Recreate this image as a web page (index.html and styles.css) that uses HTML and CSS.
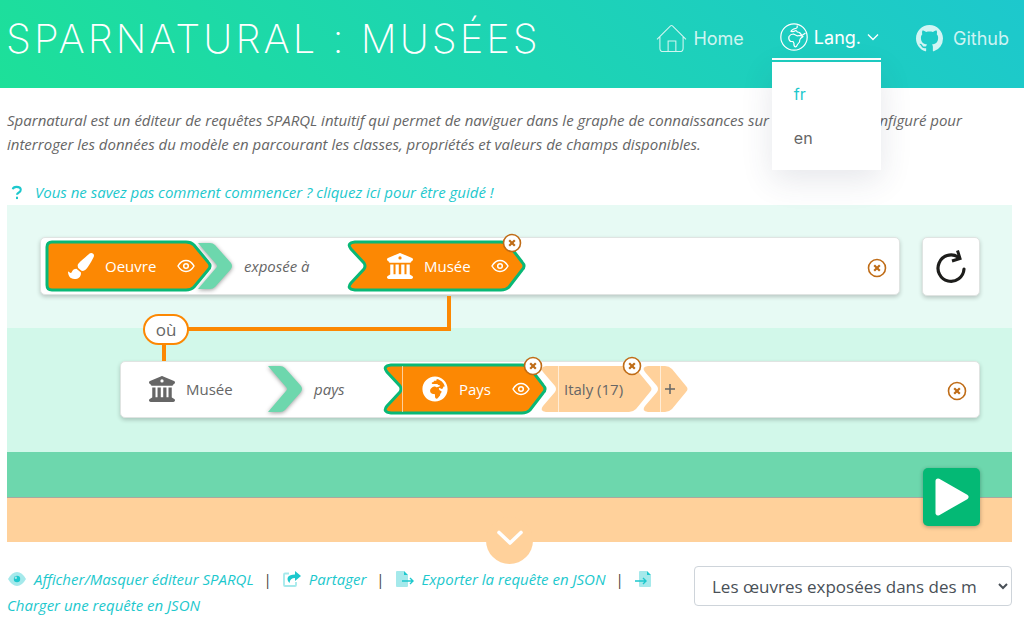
FILE: index.html
```html
<!DOCTYPE html>
<html lang="fr">
<head>
<meta charset="utf-8">
<meta name="viewport" content="width=device-width, initial-scale=1">
<title>Sparnatural : Musées</title>
<link rel="stylesheet" href="styles.css">
</head>
<body>
<svg class="sprite" aria-hidden="true">
  <symbol id="i-museum" viewBox="0 0 512 512"><path d="M243.400 2.600l-224 96c-14 6-21.800 21-18.700 35.800S16.800 160 32 160v8c0 13.300 10.700 24 24 24H456c13.300 0 24-10.700 24-24v-8c15.200 0 28.300-10.700 31.300-25.600s-4.800-29.900-18.700-35.800l-224-96c-8-3.400-17.200-3.400-25.200 0zM128 224H64V420.300c-.6 .3-1.200 .7-1.800 1.100l-48 32c-11.700 7.800-17 22.400-12.900 35.900S17.900 512 32 512H480c14.100 0 26.500-9.200 30.600-22.700s-1.100-28.100-12.900-35.900l-48-32c-.6-.4-1.200-.7-1.800-1.100V224H384V416H344V224H280V416H232V224H168V416H128V224zM256 64a32 32 0 1 1 0 64 32 32 0 1 1 0-64z"/></symbol>
  <symbol id="i-brush" viewBox="0 0 512 512"><path d="M167.020 309.340c-40.120 2.580-76.530 17.860-97.190 72.300-2.350 6.210-8 9.980-14.590 9.980-11.110 0-45.460-27.670-55.250-34.350C0 439.620 37.930 512 128 512c75.860 0 128-43.770 128-120.190 0-3.110-.65-6.080-.97-9.130l-88.010-73.340zM457.890 0c-15.160 0-29.370 6.710-40.210 16.450C213.270 199.050 192 203.340 192 257.090c0 13.700 3.250 26.760 8.730 38.700l63.820 53.180c7.210 1.800 14.640 3.030 22.390 3.030 62.110 0 98.110-45.470 211.160-256.460 7.380-14.350 13.900-29.850 13.900-45.990C512 20.640 486 0 457.890 0z"/></symbol>
  <symbol id="i-globe" viewBox="0 0 496 512"><path d="M248 8C111.030 8 0 119.030 0 256s111.030 248 248 248 248-111.030 248-248S384.970 8 248 8zm160 215.500v6.930c0 5.870-3.320 11.240-8.570 13.860l-15.390 7.700a15.485 15.485 0 0 1-15.530-.97l-18.210-12.140a15.520 15.520 0 0 0-13.500-1.810l-2.650.88c-9.700 3.230-13.660 14.790-7.990 23.300l13.240 19.860c2.870 4.310 7.710 6.900 12.890 6.900h8.210c8.560 0 15.500 6.940 15.500 15.500v11.340c0 3.350-1.090 6.620-3.100 9.300l-18.740 24.980c-1.420 1.900-2.390 4.100-2.830 6.430l-4.300 22.830c-.62 3.290-2.290 6.290-4.760 8.560a159.608 159.608 0 0 0-25 29.160l-13.030 19.550a27.756 27.756 0 0 1-23.090 12.360c-10.510 0-20.120-5.940-24.820-15.340a78.902 78.902 0 0 1-8.330-35.290V367.500c0-8.560-6.940-15.500-15.500-15.500h-25.880c-14.490 0-28.380-5.760-38.630-16a54.659 54.659 0 0 1-16-38.630v-14.060c0-17.190 8.100-33.380 21.850-43.700l27.580-20.690a54.663 54.663 0 0 1 32.780-10.930h.89c8.480 0 16.850 1.970 24.430 5.770l14.720 7.360c3.680 1.840 7.930 2.140 11.830.84l47.310-15.770c6.330-2.110 10.600-8.030 10.600-14.700 0-8.560-6.940-15.500-15.500-15.500h-10.090c-4.110 0-8.050-1.630-10.960-4.540l-6.920-6.920a15.493 15.493 0 0 0-10.960-4.540H199.500c-8.560 0-15.500-6.940-15.500-15.500v-4.400c0-7.110 4.840-13.310 11.740-15.040l14.450-3.610c3.740-.94 7-3.230 9.140-6.440l8.080-12.110c2.870-4.310 7.710-6.900 12.890-6.900h24.210c8.560 0 15.500-6.940 15.500-15.500v-21.700C359.230 71.630 422.860 131.020 441.930 208H423.500c-8.560 0-15.500 6.940-15.500 15.500z"/></symbol>
  <symbol id="i-eye" viewBox="0 0 18 14"><path d="M1 7C3 3.500 5.800 1.500 9 1.500S15 3.500 17 7c-2 3.500-4.800 5.500-8 5.500S3 10.500 1 7z" fill="none" stroke="currentColor" stroke-width="1.500"/><circle cx="9" cy="7" r="2.300" fill="none" stroke="currentColor" stroke-width="1.500"/></symbol>
  <symbol id="i-close" viewBox="0 0 20 20"><circle cx="10" cy="10" r="8.500" fill="#fff" stroke="#bf6c17" stroke-width="1.600"/><path d="M7.200 7.200l5.600 5.600M12.800 7.200l-5.600 5.600" stroke="#bf6c17" stroke-width="2.200" /></symbol>
  <symbol id="i-arrow" viewBox="0 0 34 46"><path d="M0 0H12Q15 0 17 2L33 20Q35 23 33 26L17 44Q15 46 12 46H0L18 25Q20 23 18 21z"/></symbol>
</svg>

<header class="header">
  <h1 class="title">SPARNATURAL : MUSÉES</h1>
  <nav class="nav">
    <a class="nav-link" href="#home">
      <svg class="icon-home" viewBox="0 0 32 30" fill="none" stroke="currentColor"><path d="M1 16L15 2Q16 1.200 17 2L31 16M4 13V25Q4 28.500 7.500 28.500H24.500Q28 28.500 28 25V13M12.500 28V17.500H20.500V28" stroke-width="1.100"/></svg>
      Home
    </a>
    <div class="lang">
      <a class="nav-link nav-active" href="#lang">
        <svg class="icon-lang" viewBox="0 0 28 28" fill="none" stroke="currentColor" stroke-width="1.200" stroke-linejoin="round"><circle cx="14" cy="14" r="13.200"/><path d="M17 2.500Q18 5 15.500 5.500Q11.500 6.500 11 8.500Q13 9 16 7.500Q17 9.500 19.500 9.500L22 12.500L25.500 10M9 13.500Q10.500 11 13.500 11L17 12.800L20 12.500L23 13.500L20.500 15.500Q19.500 17 19.500 19L17.500 21.500Q16.500 24 15.500 24Q13.500 23 14 20.500L13 18.500H10.500Q8 16.500 9 13.500z"/></svg>
        Lang.
        <svg class="icon-caret" viewBox="0 0 12 8" fill="none" stroke="currentColor" stroke-width="1.400"><path d="M1 1.500L6 6.500L11 1.500"/></svg>
      </a>
      <div class="menu">
        <a class="menu-item menu-current" href="#fr">fr</a>
        <a class="menu-item" href="#en">en</a>
      </div>
    </div>
    <a class="nav-link nav-github" href="#github">
      <svg class="icon-github" viewBox="0 0 16 16" fill="currentColor"><path d="M8 0C3.580 0 0 3.580 0 8c0 3.540 2.290 6.530 5.470 7.590.4.070.55-.17.55-.38 0-.19-.01-.82-.01-1.490-2.010.37-2.530-.49-2.690-.94-.09-.23-.48-.94-.82-1.130-.28-.15-.68-.52-.01-.53.63-.01 1.080.58 1.230.82.72 1.210 1.870.87 2.330.66.07-.52.28-.87.51-1.070-1.780-.2-3.640-.89-3.640-3.950 0-.87.31-1.590.82-2.150-.08-.2-.36-1.020.08-2.120 0 0 .67-.21 2.200.82.64-.18 1.320-.27 2-.27s1.360.09 2 .27c1.530-1.040 2.200-.82 2.200-.82.44 1.100.16 1.920.08 2.120.51.56.82 1.270.82 2.150 0 3.070-1.870 3.750-3.650 3.950.29.25.54.73.54 1.480 0 1.070-.01 1.930-.01 2.200 0 .21.15.46.55.38A8.013 8.013 0 0 0 16 8c0-4.420-3.580-8-8-8z"/></svg>
      Github
    </a>
  </nav>
</header>

<main class="main">
  <p class="intro">Sparnatural est un éditeur de requêtes SPARQL intuitif qui permet de naviguer dans le graphe de connaissances sur lequel il a été configuré pour interroger les données du modèle en parcourant les classes, propriétés et valeurs de champs disponibles.</p>
  <a class="guide" href="#guide">
    <svg class="icon-help" viewBox="0 0 12 16" fill="none" stroke="currentColor" stroke-width="2.200"><path d="M1.500 4.500Q2 2 5.500 2Q10 2 10 5Q10 7 8 8Q6 9 6 10.500"/><path d="M6 12.500V15"/></svg>
    <span>Vous ne savez pas comment commencer ? cliquez ici pour être guidé !</span>
  </a>

  <section class="builder">
    <div class="band band-first">
      <div class="card">
        <div class="chip chip-start">
          <svg class="shape" viewBox="0 0 167 52"><path class="selected" d="M7 2H141Q146 2 149 5L163 22Q167 26 163 30L149 47Q146 50 141 50H7Q2 50 2 45V7Q2 2 7 2z"/></svg>
          <svg class="icon-class"><use href="#i-brush"/></svg>
          <span class="chip-label">Oeuvre</span>
          <button class="eye" aria-label="Afficher Oeuvre"><svg><use href="#i-eye"/></svg></button>
        </div>
        <svg class="arrow arrow-tucked"><use href="#i-arrow"/></svg>
        <span class="property property-long">exposée à</span>
        <div class="chip chip-museum">
          <svg class="shape" viewBox="0 0 179 52"><path class="selected" d="M8 2H154Q159 2 162 5L175 22Q179 26 175 30L162 47Q159 50 154 50H8Q-1 49 4 43L17 29Q19 26 17 23L4 9Q-1 3 8 2z"/></svg>
          <svg class="icon-class"><use href="#i-museum"/></svg>
          <span class="chip-label">Musée</span>
          <button class="eye" aria-label="Afficher Musée"><svg><use href="#i-eye"/></svg></button>
          <button class="close badge" aria-label="Retirer Musée"><svg><use href="#i-close"/></svg></button>
        </div>
        <button class="close close-row" aria-label="Supprimer la ligne"><svg><use href="#i-close"/></svg></button>
      </div>
      <button class="reset" aria-label="Réinitialiser">
        <svg viewBox="0 0 32 34" fill="none" stroke="#1d1d1b" stroke-width="3.200"><path d="M29 19A13 13.200 0 1 1 23 7" stroke-linecap="round"/><path d="M22.500 .5L25 8.500L17 11" stroke-width="3"/></svg>
      </button>
    </div>

    <div class="band band-second">
      <div class="link-line">
        <span class="where">où</span>
      </div>
      <div class="card">
        <div class="plain">
          <svg class="icon-class"><use href="#i-museum"/></svg>
          <span class="chip-label">Musée</span>
        </div>
        <svg class="arrow"><use href="#i-arrow"/></svg>
        <span class="property">pays</span>
        <div class="chip chip-country">
          <svg class="shape" viewBox="0 0 164 52"><path class="selected" d="M8 2H139Q144 2 147 5L160 22Q164 26 160 30L147 47Q144 50 139 50H8Q-1 49 4 43L17 29Q19 26 17 23L4 9Q-1 3 8 2z"/><path class="seam" d="M19.500 3V49"/></svg>
          <svg class="icon-class"><use href="#i-globe"/></svg>
          <span class="chip-label">Pays</span>
          <button class="eye" aria-label="Afficher Pays"><svg><use href="#i-eye"/></svg></button>
          <button class="close badge" aria-label="Retirer Pays"><svg><use href="#i-close"/></svg></button>
        </div>
        <div class="value value-italy">
          <svg class="shape" viewBox="0 0 111 46"><path class="pale" d="M5 0H88Q92 0 95 3L109 20Q112 23 109 26L95 43Q92 46 88 46H5Q-2 45 2 40L14 26Q16 23 14 20L2 6Q-2 1 5 0z"/><path class="seam" d="M17.500 0V46"/></svg>
          <span>Italy (17)</span>
          <button class="close badge" aria-label="Retirer Italy"><svg><use href="#i-close"/></svg></button>
        </div>
        <button class="value value-add" aria-label="Ajouter une valeur">
          <svg class="shape" viewBox="0 0 45 46"><path class="pale" d="M5 0H22Q26 0 29 3L43 20Q46 23 43 26L29 43Q26 46 22 46H5Q-2 45 2 40L14 26Q16 23 14 20L2 6Q-2 1 5 0z"/><path class="seam" d="M17.500 0V46"/></svg>
          <svg class="plus" viewBox="0 0 12 12"><path d="M6 1V11M1 6H11" stroke="#666" stroke-width="1.500"/></svg>
        </button>
        <button class="close close-row" aria-label="Supprimer la ligne"><svg><use href="#i-close"/></svg></button>
      </div>
    </div>

    <div class="band-submit">
      <button class="play" aria-label="Lancer la requête">
        <svg viewBox="0 0 34 38"><path d="M3 3L31 19L3 35z" fill="#fff" stroke="#fff" stroke-width="5" stroke-linejoin="round"/></svg>
      </button>
    </div>
    <div class="band-more">
      <button class="more" aria-label="Plus d'options">
        <svg viewBox="0 0 28 16" fill="none" stroke="#fff" stroke-width="3.600" stroke-linecap="round" stroke-linejoin="round"><path d="M3 2.500L14 13L25 2.500"/></svg>
      </button>
    </div>
  </section>

  <footer class="footer">
    <div class="links">
      <a href="#sparql"><svg class="icon-link" viewBox="0 0 18 16"><path d="M0 8Q4 1 9 1T18 8Q14 15 9 15T0 8z" fill="#a5e9eb"/><circle cx="9" cy="8" r="3.200" fill="#1dc8cd"/><circle cx="7.800" cy="6.800" r="1.200" fill="#a5e9eb"/></svg>Afficher/Masquer éditeur SPARQL</a><span class="sep">|</span><a href="#share"><svg class="icon-link" viewBox="0 0 18 16"><path d="M6 2.500H2Q1 2.500 1 3.500V14Q1 15 2 15H12Q13 15 13 14V11" fill="none" stroke="#a5e9eb" stroke-width="1.800"/><path d="M12 0L18 5L12 10V7Q7 7 6.500 12Q3.500 9 5 6Q6.500 3.500 12 3.500z" fill="#1dc8cd"/></svg>Partager</a><span class="sep">|</span><a href="#export"><svg class="icon-link" viewBox="0 0 18 16"><path d="M0 1Q0 0 1 0H8V4H12V15Q12 16 11 16H1Q0 16 0 15z" fill="#a5e9eb"/><path d="M8 0L12 4H8z" fill="#1dc8cd"/><path d="M6 10H17M14 7L17 10L14 13" fill="none" stroke="#1dc8cd" stroke-width="1.400"/></svg>Exporter la requête en JSON</a><span class="sep">|</span><a href="#load"><svg class="icon-link" viewBox="0 0 18 16"><path d="M4 1Q4 0 5 0H12V4H16V15Q16 16 15 16H5Q4 16 4 15z" fill="#a5e9eb"/><path d="M12 0L16 4H12z" fill="#1dc8cd"/><path d="M0 10H11M8 7L11 10L8 13" fill="none" stroke="#1dc8cd" stroke-width="1.400"/></svg> Charger une&nbsp;requête en&nbsp;JSON</a>
    </div>
    <select class="examples" aria-label="Exemples de requêtes">
      <option>Les œuvres exposées dans des musées</option>
    </select>
  </footer>
</main>
</body>
</html>
```
FILE: styles.css
```css
* { box-sizing: border-box; }

body {
  margin: 0;
  background: #fff;
  color: #666;
  font-family: "Open Sans", "Noto Sans", sans-serif;
  font-size: 15px;
}

a { text-decoration: none; }
button { margin: 0; padding: 0; border: 0; background: none; color: inherit; font: inherit; cursor: pointer; }
svg { display: block; flex: none; }
.sprite { position: absolute; width: 0; height: 0; }

/* Header */
.header {
  display: flex;
  justify-content: space-between;
  height: 88px;
  padding: 0 15px 0 6px;
  background: linear-gradient(45deg, #1de099, #1dc8cd);
  color: #fff;
  font-family: Inter, "Open Sans", sans-serif;
}
.title { margin: 0; font-size: 40px; font-weight: 200; line-height: 78px; letter-spacing: 3px; white-space: nowrap; }
.nav { display: flex; align-items: flex-start; gap: 28px; padding-top: 16px; font-size: 18px; }
.nav-link { display: flex; align-items: center; height: 44px; gap: 6px; color: rgba(255, 255, 255, .8); }
.nav-active { color: #fff; padding: 0 2px 0 8px; border-bottom: 2px solid #fff; }
.nav-github { margin-left: 7px; gap: 8px; }
.icon-home { width: 31px; height: 29px; }
.icon-lang { width: 28px; height: 28px; }
.icon-github { width: 27px; height: 27px; margin-right: 2px; }
.icon-caret { width: 12px; height: 8px; }
.lang { position: relative; }
.menu {
  position: absolute;
  top: 46px;
  left: 0;
  z-index: 5;
  display: flex;
  flex-direction: column;
  gap: 20px;
  width: 109px;
  padding: 20px 22px;
  background: #fff;
  box-shadow: 0 10px 30px rgba(50, 60, 90, .12);
  font-size: 16px;
  line-height: 24px;
}
.menu-item { color: #666; }
.menu-current { color: #1dc8cd; }

/* Introduction */
.main { padding: 20px 12px 0 7px; }
.intro { margin: 0; font-style: italic; line-height: 24px; }
.guide { display: flex; align-items: center; gap: 12px; margin-top: 24px; padding-bottom: 1px; color: #1dc8cd; font-style: italic; line-height: 24px; }
.icon-help { width: 12px; height: 15px; margin-left: 4px; }

/* Query builder */
.band { position: relative; display: flex; align-items: flex-start; gap: 22px; padding: 32px 32px 0 33px; }
.band-first { height: 123px; background: #e7faf4; }
.band-second { height: 124px; padding-top: 33px; padding-left: 113px; background: #d2f8ea; }
.card {
  display: flex;
  flex: 1;
  align-items: center;
  height: 58px;
  padding-left: 4px;
  border: 1px solid #e0e4e2;
  border-radius: 5px;
  background: #fff;
  box-shadow: 0 2px 4px rgba(0, 0, 0, .2);
}
.band-second .card { height: 57px; padding-bottom: 1px; }
.chip { position: relative; z-index: 1; display: flex; flex: none; align-items: center; height: 52px; color: #fff; }
.chip-label { flex: 1; margin-left: 11px; }
.chip-start { width: 167px; padding: 0 17px 0 23px; }
.chip-museum { width: 179px; padding: 0 17px 0 40px; }
.chip-country { width: 164px; padding: 0 17px 0 39px; }
.shape { position: absolute; inset: 0; z-index: -1; width: 100%; height: 100%; overflow: visible; }
.selected { fill: #fc8803; stroke: #09b876; stroke-width: 3; }
.seam { fill: none; stroke: #fff; stroke-opacity: .6; stroke-width: 1; }
.pale { fill: #ffd19b; }
.icon-class { width: 26px; height: 26px; fill: currentColor; }
.eye svg { width: 18px; height: 14px; }
.close svg { width: 20px; height: 20px; }
.badge { position: absolute; top: -7px; right: 4px; }
.close-row { margin: 4px 12px 0 auto; }
.arrow { width: 34px; height: 46px; fill: #6dd7ad; filter: drop-shadow(0 1px 2px rgba(0, 0, 0, .4)); }
.arrow-tucked { margin-left: -14px; }
.property { width: 69px; margin-left: 12px; font-style: italic; }
.property-long { width: 103px; }
.plain { display: flex; align-items: center; width: 143px; padding-left: 24px; }
.value { position: relative; z-index: 0; display: flex; flex: none; align-items: center; height: 46px; color: #666; }
.value-italy { width: 111px; margin-left: -6px; padding-left: 23px; }
.value-italy .badge { right: 10px; top: -10px; }
.value-add { width: 45px; margin-left: -9px; padding-left: 21px; }
.plus { width: 12px; height: 12px; }
.reset {
  display: grid;
  place-items: center;
  width: 58px;
  height: 59px;
  border: 1px solid #e0e4e2;
  border-radius: 5px;
  background: #fff;
  box-shadow: 0 2px 4px rgba(0, 0, 0, .2);
}
.reset svg { width: 32px; height: 34px; }

/* Connector from a class of the first row to the nested row */
.link-line { position: absolute; top: -32px; left: 156px; width: 288px; height: 35px; border: solid #fc8803; border-width: 0 4px 4px 0; }
.link-line::after { content: ""; position: absolute; top: 48px; left: -1px; width: 4px; height: 17px; background: #fc8803; }
.where {
  position: absolute;
  top: 18px;
  left: -20px;
  width: 46px;
  height: 31px;
  border: 2px solid #fc8803;
  border-radius: 16px;
  background: #fff;
  font-size: 17px;
  line-height: 27px;
  text-align: center;
}

.band-submit { display: flex; justify-content: flex-end; height: 46px; padding: 16px 32px 0 0; border-bottom: 1px solid #a9a8a0; background: #6dd7ad; }
.play { position: relative; z-index: 1; display: grid; place-items: center; width: 57px; height: 58px; border-radius: 5px; background: #04b975; box-shadow: 0 1px 4px rgba(0, 0, 0, .3); }
.play svg { width: 34px; height: 38px; }
.band-more { display: flex; justify-content: center; height: 44px; padding-top: 19px; background: #ffd19b; }
.more { display: flex; justify-content: center; width: 47px; height: 47px; padding-top: 13px; border-radius: 50%; background: #ffd19b; }
.more svg { width: 28px; height: 16px; }

/* Footer */
.footer { display: flex; align-items: flex-start; justify-content: space-between; gap: 24px; padding-top: 24px; }
.links { flex: 1; font-style: italic; line-height: 26px; }
.links a { color: #1dc8cd; }
.icon-link { display: inline-block; width: 18px; height: 16px; margin: 0 8px 0 1px; vertical-align: -2px; }
.sep { margin: 0 10px; color: #444; font-style: normal; }
.examples { width: 318px; height: 40px; padding: 6px 18px 6px 13px; border: 1px solid #ced4da; border-radius: 4px; background-color: #fff; color: #495057; font: 17px "Open Sans", sans-serif; }
```
